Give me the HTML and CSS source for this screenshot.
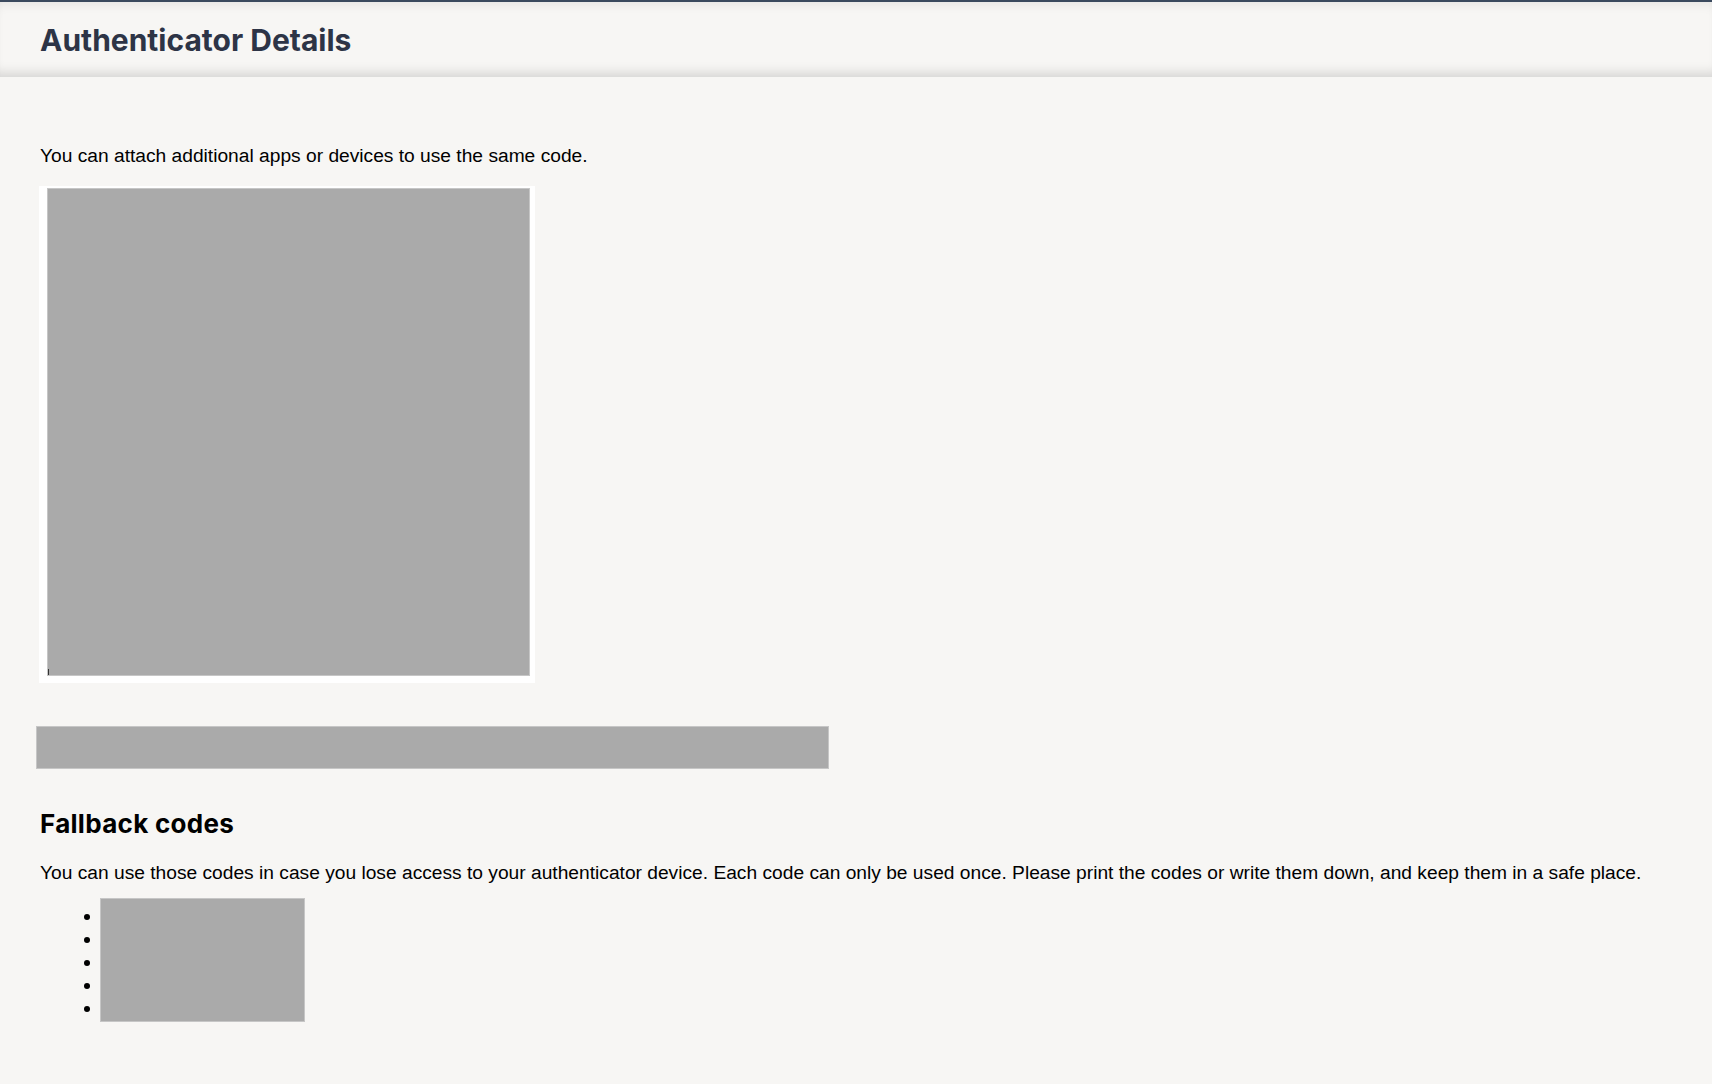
FILE: index.html
```html
<!DOCTYPE html>
<html lang="en">
<head>
    <meta charset="UTF-8">
    <meta name="viewport" content="width=device-width, initial-scale=1.0">
    <title>Authenticator Details</title>
    <link rel="stylesheet" href="styles.css">
</head>
<body>
    <header class="topbar">
        <h1>Authenticator Details</h1>
    </header>

    <main class="content">
        <p class="lead">You can attach additional apps or devices to use the same code.</p>

        <div class="qr-frame">
            <div class="qr-image"></div>
        </div>

        <div class="secret-key"></div>

        <h2>Fallback codes</h2>
        <p>You can use those codes in case you lose access to your authenticator device. Each code can only be used once. Please print the codes or write them down, and keep them in a safe place.</p>
        <div class="codes">
            <ul>
                <li>&nbsp;</li>
                <li>&nbsp;</li>
                <li>&nbsp;</li>
                <li>&nbsp;</li>
                <li>&nbsp;</li>
            </ul>
            <div class="codes-mask"></div>
        </div>
    </main>
</body>
</html>
```

FILE: styles.css
```css
body {
    margin: 0;
    padding: 0;
    background-color: #f7f6f4;
    font-family: "Liberation Sans", Arial, sans-serif;
    color: #000;
}
.topbar {
    height: 77px;
    border-top: 2px solid #3b4a5e;
    box-sizing: border-box;
    padding-left: 40px;
    display: flex;
    align-items: center;
    background-color: #f7f6f4;
    box-shadow: inset 0 10px 12px -8px rgba(0, 0, 0, 0.08),
                inset 0 -12px 12px -8px rgba(0, 0, 0, 0.14);
}
.topbar h1 {
    margin: 0;
    font-family: Inter, sans-serif;
    font-weight: 700;
    font-size: 30px;
    color: #2d3446;
}
.content {
    padding: 68px 40px 40px 40px;
}
.content p {
    margin: 0;
    font-size: 19.2px;
    line-height: 22px;
}
.qr-frame {
    width: 496px;
    height: 497px;
    box-sizing: border-box;
    margin-top: 19px;
    margin-left: -1px;
    padding: 2px 5px 7px 8px;
    background-color: #fff;
}
.qr-image {
    position: relative;
    height: 100%;
    background-color: #aaa;
    border: 1px solid #c6c6c6;
    box-sizing: border-box;
}
.qr-image::after {
    content: "";
    position: absolute;
    left: 0;
    bottom: 0;
    width: 1px;
    height: 6px;
    background-color: #333;
}
.secret-key {
    width: 793px;
    height: 43px;
    margin: 43px 0 0 -4px;
    box-sizing: border-box;
    background-color: #aaa;
    border: 1px solid #c6c6c6;
}
h2 {
    margin: 37px 0 20px 0;
    font-family: Inter, sans-serif;
    font-weight: 700;
    font-size: 26px;
    letter-spacing: 0.3px;
    line-height: 36px;
    color: #000;
}
.codes {
    position: relative;
    margin-top: 14px;
}
.codes ul {
    margin: 0;
    padding: 6px 0 0 62px;
    font-size: 19.2px;
    line-height: 23px;
}
.codes-mask {
    position: absolute;
    left: 60px;
    top: 0;
    width: 205px;
    height: 124px;
    background-color: #aaa;
    border: 1px solid #c6c6c6;
    box-sizing: border-box;
}
```
